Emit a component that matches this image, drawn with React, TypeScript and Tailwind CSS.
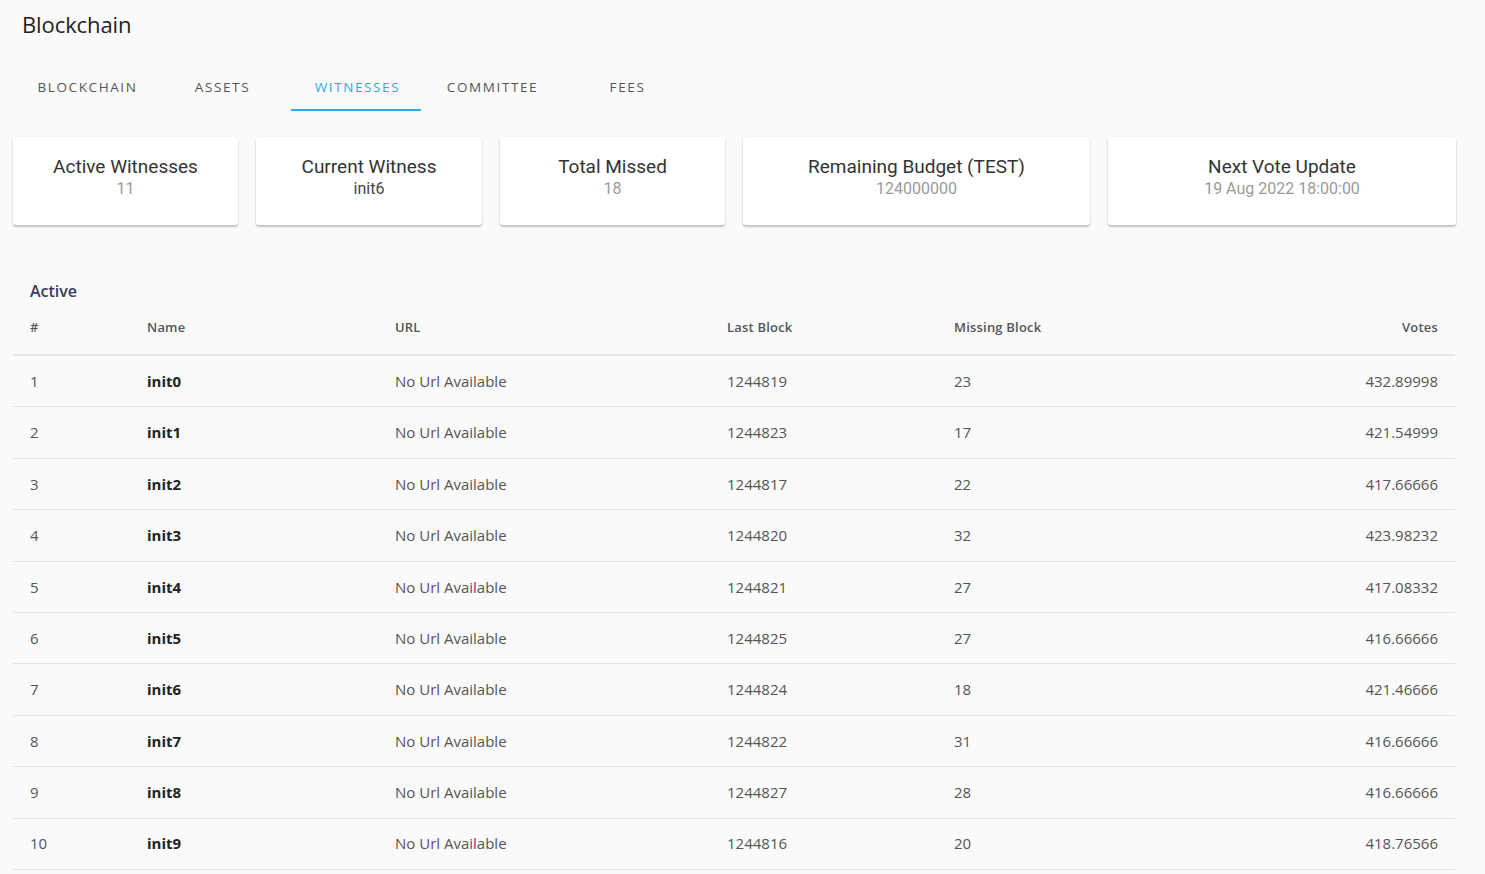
import React from "react";

const tabs = ["BLOCKCHAIN", "ASSETS", "WITNESSES", "COMMITTEE", "FEES"];

const cards = [
  { title: "Active Witnesses", value: "11", w: "w-[225px]", dark: false },
  { title: "Current Witness", value: "init6", w: "w-[226px]", dark: true },
  { title: "Total Missed", value: "18", w: "w-[225px]", dark: false },
  { title: "Remaining Budget (TEST)", value: "124000000", w: "w-[347px]", dark: false },
  { title: "Next Vote Update", value: "19 Aug 2022 18:00:00", w: "w-[348px]", dark: false },
];

const rows = [
  ["1", "init0", "1244819", "23", "432.89998"],
  ["2", "init1", "1244823", "17", "421.54999"],
  ["3", "init2", "1244817", "22", "417.66666"],
  ["4", "init3", "1244820", "32", "423.98232"],
  ["5", "init4", "1244821", "27", "417.08332"],
  ["6", "init5", "1244825", "27", "416.66666"],
  ["7", "init6", "1244824", "18", "421.46666"],
  ["8", "init7", "1244822", "31", "416.66666"],
  ["9", "init8", "1244827", "28", "416.66666"],
  ["10", "init9", "1244816", "20", "418.76566"],
];

export default function App() {
  return (
    <div
      className="min-h-[874px] w-full bg-[#fafafa] text-[#333]"
      style={{ fontFamily: "'Open Sans', sans-serif" }}
    >
      <div className="pl-[22px] pt-[9px] h-[59px] text-[22px] leading-[30px] text-[#222] tracking-[-0.1px]">
        Blockchain
      </div>
      <div className="flex pl-[20px] h-[53px]">
        {tabs.map((t) => {
          const active = t === "WITNESSES";
          return (
            <div
              key={t}
              className={`w-[135px] flex items-center justify-center text-[13.5px] tracking-[1.6px] relative ${
                active ? "text-[#29abe2]" : "text-[#555]"
              }`}
            >
              <span className="pt-[4px]">{t}</span>
              {active && (
                <div className="absolute bottom-[1px] left-[1px] w-[130px] h-[2px] bg-[#29abe2]" />
              )}
            </div>
          );
        })}
      </div>
      <div className="flex gap-[18px] pl-[13px] pt-[25px]">
        {cards.map((c) => (
          <div
            key={c.title}
            className={`${c.w} h-[88px] bg-white rounded-[3px] shadow-[0_2px_2px_rgba(0,0,0,0.22),0_0_2px_rgba(0,0,0,0.08)] flex flex-col items-center pt-[18px]`}
            style={{ fontFamily: "Roboto, sans-serif" }}
          >
            <div className="text-[19px] leading-[24px] text-[#333]">{c.title}</div>
            <div className={`text-[16px] leading-[19px] ${c.dark ? "text-[#444]" : "text-[#9a9a9a]"}`}>
              {c.value}
            </div>
          </div>
        ))}
      </div>
      <div className="pl-[30px] pt-[55px] text-[16px] leading-[22px] font-semibold text-[#363c5c]">
        Active
      </div>
      <div className="mx-[13px] w-[1442px]">
        <div className="flex h-[54px] items-center text-[13px] font-semibold text-[#555] border-b-2 border-[#e8e8e8] tracking-[0.2px]">
          <div className="w-[134px] pl-[17px]">#</div>
          <div className="w-[248px]">Name</div>
          <div className="w-[332px]">URL</div>
          <div className="w-[227px]">Last Block</div>
          <div className="w-[200px]">Missing Block</div>
          <div className="flex-1 text-right pr-[17px]">Votes</div>
        </div>
        {rows.map((r) => (
          <div
            key={r[0]}
            className="flex h-[51.4px] items-center text-[15px] text-[#555] border-b border-[#e2e2e2]"
          >
            <div className="w-[134px] pl-[17px]">{r[0]}</div>
            <div className="w-[248px] font-bold text-[#222]">{r[1]}</div>
            <div className="w-[332px]">No Url Available</div>
            <div className="w-[227px]">{r[2]}</div>
            <div className="w-[200px]">{r[3]}</div>
            <div className="flex-1 text-right pr-[17px]">{r[4]}</div>
          </div>
        ))}
      </div>
    </div>
  );
}
